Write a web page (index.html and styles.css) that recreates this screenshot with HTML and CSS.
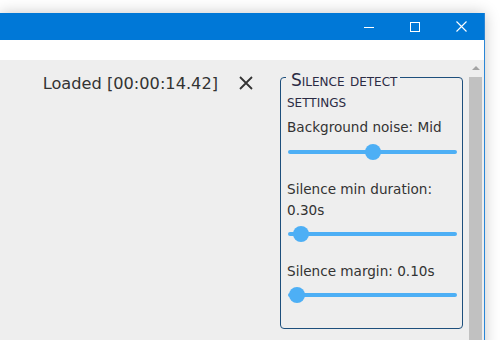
FILE: index.html
```html
<!DOCTYPE html>
<html lang="en">
<head>
  <meta charset="UTF-8">
  <title>Silence detect</title>
  <link rel="stylesheet" href="styles.css">
</head>
<body>
  <div class="window">
    <div class="titlebar">
      <button class="win-btn" aria-label="Minimize">
        <svg width="10" height="10" viewBox="0 0 10 10"><path d="M0 5.5h10" stroke="#fff" stroke-width="1"/></svg>
      </button>
      <button class="win-btn" aria-label="Maximize">
        <svg width="10" height="10" viewBox="0 0 10 10"><rect x="0.5" y="0.5" width="9" height="9" fill="none" stroke="#fff" stroke-width="1"/></svg>
      </button>
      <button class="win-btn" aria-label="Close">
        <svg width="11" height="11" viewBox="0 0 11 11"><path d="M0.5 0.5l10 10M10.5 0.5l-10 10" stroke="#fff" stroke-width="1.1"/></svg>
      </button>
    </div>
    <div class="menubar"></div>

    <div class="content">
      <div class="main">
        <div class="status">
          <span class="status-text">Loaded [00:00:14.42]</span>
          <button class="clear-btn" aria-label="Clear">
            <svg width="14" height="14" viewBox="0 0 14 14"><path d="M1 1l12 12M13 1L1 13" stroke="#333" stroke-width="1.8"/></svg>
          </button>
        </div>

        <fieldset class="group">
          <legend>Silence detect</legend>
          <div class="group-sub">settings</div>

          <div class="field-label first">Background noise: Mid</div>
          <input class="slider" type="range" min="0" max="100" step="any" value="50">

          <div class="field-label">Silence min duration: 0.30s</div>
          <input class="slider" type="range" min="0" max="100" step="any" value="3.3">

          <div class="field-label">Silence margin: 0.10s</div>
          <input class="slider" type="range" min="0" max="100" step="any" value="0.7">
        </fieldset>
      </div>

      <div class="scrollbar">
        <div class="scroll-up"><span class="arrow"></span></div>
        <div class="scroll-thumb"></div>
      </div>
    </div>
  </div>
</body>
</html>
```

FILE: styles.css
```css
html, body {
  margin: 0;
  height: 100%;
}

body {
  width: 500px;
  height: 340px;
  overflow: hidden;
  background-color: #fff;
  font-family: 'DejaVu Sans', Verdana, sans-serif;
  color: #333;
}

.window {
  width: 484px;
  height: 340px;
  margin-top: 13px;
  border-right: 1px solid #2a86d6;
  background-color: #eee;
  box-shadow: 0 0 14px rgba(0, 0, 0, 0.22);
  display: flex;
  flex-direction: column;
}

.titlebar {
  height: 27px;
  background-color: #0078d7;
  display: flex;
  justify-content: flex-end;
}

.win-btn {
  width: 46px;
  height: 27px;
  padding: 0;
  border: none;
  background: none;
  display: flex;
  align-items: center;
  justify-content: center;
}

.menubar {
  height: 20px;
  background-color: #fff;
}

.content {
  flex: 1;
  display: flex;
  background-color: #eee;
}

.main {
  flex: 1;
  display: flex;
  justify-content: flex-end;
  align-items: flex-start;
  padding: 7px 6px 0 0;
}

.status {
  display: flex;
  align-items: center;
  gap: 21px;
  margin: 4px 27px 0 0;
  height: 24px;
}

.status-text {
  font-size: 16.2px;
}

.clear-btn {
  width: 14px;
  height: 14px;
  padding: 0;
  border: none;
  background: none;
  display: flex;
}

.group {
  width: 183px;
  box-sizing: border-box;
  margin: 0;
  padding: 4px 5px 25px 6px;
  border: 1px solid #1d4f7c;
  border-radius: 4px;
  font-size: 13.6px;
  min-inline-size: 0;
}

.group legend {
  padding: 6px 3px 0 5px;
  margin-left: -1px;
  font-size: 17px;
  line-height: 14px;
  font-variant: small-caps;
  color: #2b2b44;
}

.group-sub {
  font-variant: small-caps;
  font-size: 17px;
  line-height: 21px;
  color: #2b2b44;
}

.field-label {
  line-height: 21px;
  margin-top: 19px;
}

.field-label.first {
  margin-top: 5px;
}

.slider {
  -webkit-appearance: none;
  appearance: none;
  display: block;
  width: 169px;
  height: 16px;
  margin: 6px 0 0 1px;
  background: transparent;
}

.field-label + .slider {
  margin-top: 5px;
}

.field-label.first + .slider {
  margin-top: 6px;
}

.slider::-webkit-slider-runnable-track {
  height: 4px;
  border-radius: 2px;
  background-color: #4daff5;
}

.slider::-webkit-slider-thumb {
  -webkit-appearance: none;
  width: 16px;
  height: 16px;
  margin-top: -6px;
  border-radius: 50%;
  background-color: #4daff5;
  border: none;
}

.scrollbar {
  width: 13px;
  margin-right: 2px;
  display: flex;
  flex-direction: column;
}

.scroll-up {
  height: 17px;
  display: flex;
  align-items: center;
  justify-content: center;
}

.arrow {
  width: 0;
  height: 0;
  margin-top: -2px;
  border-left: 4px solid transparent;
  border-right: 4px solid transparent;
  border-bottom: 4px solid #a3a3a3;
}

.scroll-thumb {
  flex: 1;
  background-color: #c1c1c1;
}
```
